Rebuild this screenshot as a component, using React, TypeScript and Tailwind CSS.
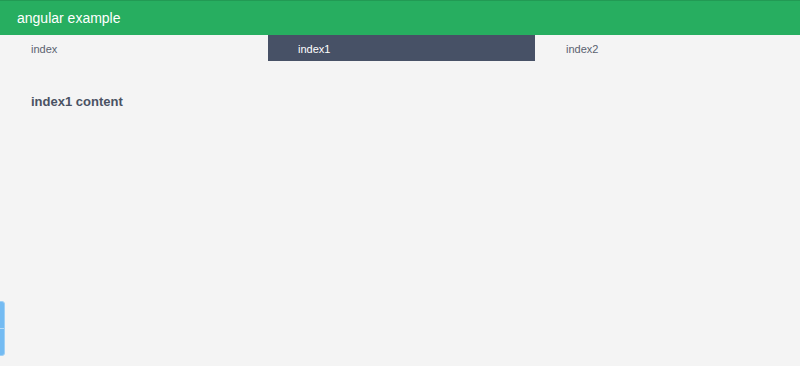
export default function App() {
  const tabs = ["index", "index1", "index2"]
  const active = 1

  return (
    <div
      className="relative min-h-[366px] bg-[#f4f4f4]"
      style={{ fontFamily: "'Liberation Sans', Arial, sans-serif" }}
    >
      {/* Header */}
      <div className="h-[35px] bg-[#27ae60] border-t border-[#229a54] flex items-center pl-[17px]">
        <span className="text-[14px] text-white">angular example</span>
      </div>

      {/* Tabs */}
      <div className="grid grid-cols-[268px_267px_1fr] h-[26px]">
        {tabs.map((t, i) => (
          <div
            key={t}
            className={
              i === active
                ? "bg-[#475166] text-white text-[11px] flex items-center pl-[30px] pt-[2px]"
                : "text-[#5b6270] text-[11px] flex items-center pl-[31px] pt-[2px]"
            }
          >
            {t}
          </div>
        ))}
      </div>

      {/* Content */}
      <div className="pl-[31px] pt-[31px]">
        <h3 className="text-[13px] font-bold text-[#4a5263]">index1 content</h3>
      </div>

      {/* Floating widget at bottom-left */}
      <div className="absolute left-[-6px] top-[301px] w-[11px] h-[55px] rounded-[3px] bg-[#74bbf2] border border-[#9fd0f5] flex flex-col">
        <div className="flex-1 border-b border-[#b5dbf7]" />
        <div className="flex-1" />
      </div>
    </div>
  )
}
